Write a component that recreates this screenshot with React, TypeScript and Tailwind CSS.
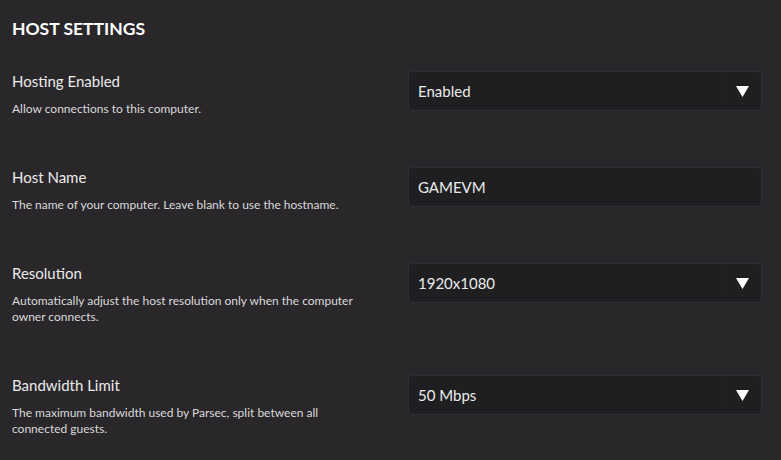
import React from "react";

function Caret() {
  return (
    <div className="flex h-full w-[39px] items-center justify-center border-l border-[#232326]">
      <svg width="13" height="11" viewBox="0 0 13 11">
        <polygon points="0,0 13,0 6.5,11" fill="#ffffff" />
      </svg>
    </div>
  );
}

function Row({
  label,
  desc,
  value,
  select,
}: {
  label: string;
  desc: React.ReactNode;
  value: string;
  select: boolean;
}) {
  return (
    <div className="flex items-start">
      <div className="w-[408px] shrink-0 pl-3">
        <div className="text-[15px] leading-[20px] text-[#ebebeb]">{label}</div>
        <div className="mt-[10px] w-[360px] text-[12px] leading-[16px] text-[#dadada]">{desc}</div>
      </div>
      <div className="flex h-[40px] w-[354px] shrink-0 items-center rounded-[3px] border border-[#2f2f33] bg-[#1f1f22]">
        <div className="flex-1 pl-[9px] text-[15px] text-[#ebebeb]">{value}</div>
        {select && <Caret />}
      </div>
    </div>
  );
}

export default function App() {
  return (
    <div
      className="h-[460px] w-[781px] overflow-hidden bg-[#29272a] pt-[17px]"
      style={{ fontFamily: "Lato, 'Noto Sans', sans-serif" }}
    >
      <h1 className="pl-3 text-[17.5px] font-bold leading-[24px] text-white">HOST SETTINGS</h1>
      <div className="mt-[30px] flex flex-col gap-[50px]">
        <Row label="Hosting Enabled" desc="Allow connections to this computer." value="Enabled" select />
        <Row
          label="Host Name"
          desc="The name of your computer. Leave blank to use the hostname."
          value="GAMEVM"
          select={false}
        />
        <Row
          label="Resolution"
          desc="Automatically adjust the host resolution only when the computer owner connects."
          value="1920x1080"
          select
        />
        <Row
          label="Bandwidth Limit"
          desc="The maximum bandwidth used by Parsec, split between all connected guests."
          value="50 Mbps"
          select
        />
      </div>
    </div>
  );
}
